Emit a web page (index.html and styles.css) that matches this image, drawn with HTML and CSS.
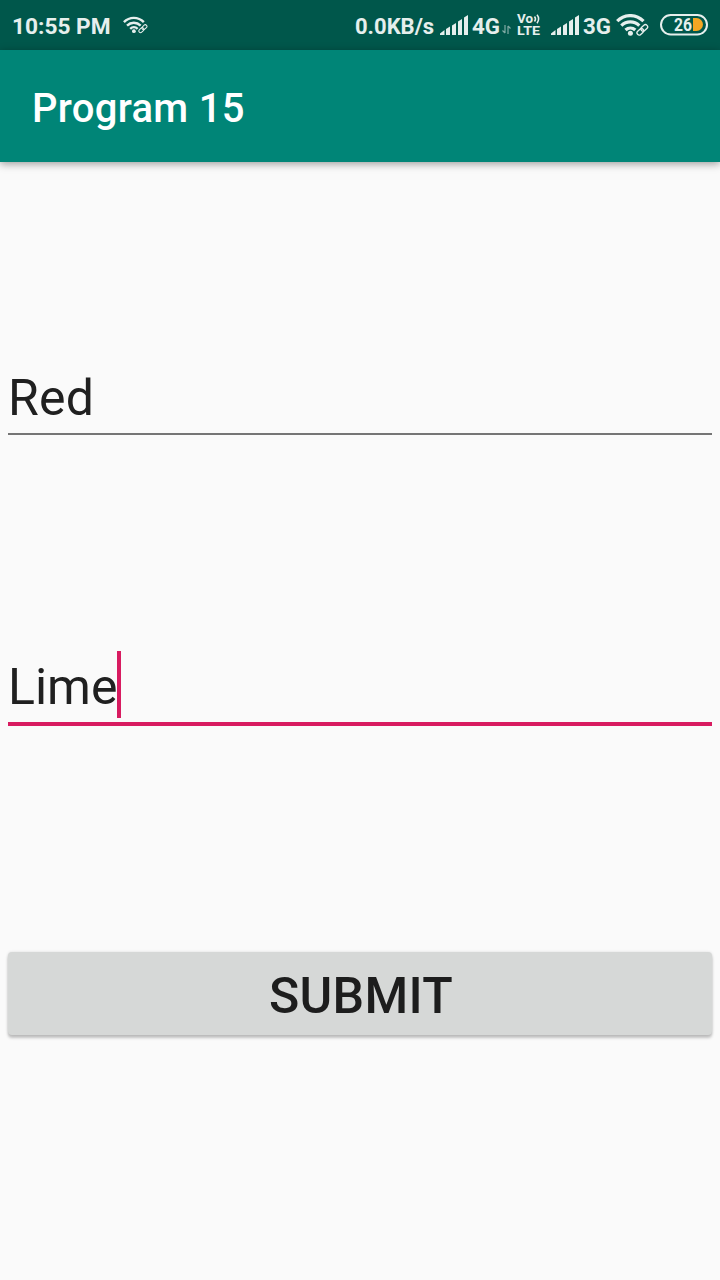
FILE: index.html
```html
<!DOCTYPE html>
<html lang="en">
<head>
<meta charset="utf-8">
<title>Program 15</title>
<link rel="stylesheet" href="styles.css">
</head>
<body>
<svg class="defs" aria-hidden="true">
  <symbol id="signal" viewBox="0 0 28 20">
    <path d="M0 20v-1.500l4.500-3.500v5zM6 14l4-2.500V20H6zM12 10.500l4-2.500v12h-4zM18 6.500l4-2.500v16h-4zM24 2.500L28 0v20h-4z"/>
  </symbol>
  <symbol id="wifi" viewBox="0 0 33 22">
    <g fill="none" stroke="currentColor" stroke-width="3.200">
      <path d="M1.200 7.200C8.500-.3 20 -.3 27.500 7.200"/>
      <path d="M5.300 11.700c5.200-5 12.800-5 18 0"/>
      <path d="M9.500 16c2.900-2.700 6.900-2.700 9.800 0"/>
    </g>
    <circle cx="14.400" cy="19.200" r="2.500"/>
    <g class="link-cut" fill="none" stroke-width="4.500">
      <path d="M21.500 20l8.500-7"/>
    </g>
    <g fill="none" stroke="currentColor" stroke-width="1.350">
      <rect x="-3.700" y="-2.200" width="7.400" height="4.400" rx="2.200" transform="translate(28.300 13.900) rotate(-43)"/>
      <rect x="-3.700" y="-2.200" width="7.400" height="4.400" rx="2.200" transform="translate(24.300 17.800) rotate(-43)"/>
    </g>
  </symbol>
</svg>
<header class="status-bar">
  <span class="time">10:55 PM</span>
  <svg class="wifi-small"><use href="#wifi"/></svg>
  <div class="status-right">
    <span class="speed">0.0KB/s</span>
    <svg class="signal"><use href="#signal"/></svg>
    <span class="network">4G</span>
    <svg class="data" viewBox="0 0 9 9"><path d="M3 0v8M0.500 5.500L3 8M6 9V1M8.500 3.500L6 1"/></svg>
    <svg class="volte" viewBox="0 0 25 22">
      <text x="0" y="9" textLength="16" lengthAdjust="spacingAndGlyphs">Vo</text>
      <text x="0" y="21" textLength="23" lengthAdjust="spacingAndGlyphs">LTE</text>
      <path d="M17.500 2.500q2 2.500 0 5M20 .8q3.200 4 0 8.400"/>
    </svg>
    <svg class="signal signal-second"><use href="#signal"/></svg>
    <span class="network">3G</span>
    <svg class="wifi"><use href="#wifi"/></svg>
    <svg class="battery" viewBox="0 0 48 22">
      <rect x="1" y="1" width="46" height="19.500" rx="9.750"/>
      <path d="M33 4h3.500a6.500 6.500 0 0 1 0 13H33z"/>
      <text x="14" y="17" textLength="18" lengthAdjust="spacingAndGlyphs">26</text>
    </svg>
  </div>
</header>
<div class="app-bar"><h1>Program 15</h1></div>
<main class="form">
  <div class="field">Red</div>
  <div class="field focused">Lime<span class="caret"></span></div>
  <button class="submit" type="button">SUBMIT</button>
</main>
</body>
</html>
```
FILE: styles.css
```css
* { box-sizing: border-box; }
body {
  margin: 0;
  height: 1280px;
  display: flex;
  flex-direction: column;
  overflow: hidden;
  background: #fafafa;
  color: #202020;
  font-family: Roboto, "Liberation Sans", sans-serif;
}
svg { display: block; flex: none; fill: currentColor; }
.defs { position: absolute; width: 0; height: 0; }
.status-bar {
  display: flex;
  flex: none;
  align-items: flex-start;
  height: 50px;
  padding: 0 12px;
  background: #00574b;
  color: #e6efed;
  font-size: 22.7px;
  font-weight: 700;
  line-height: 53px;
  white-space: nowrap;
}
.time { width: 99px; }
.wifi-small { width: 25px; height: 18px; margin: 16px 0 0 12px; }
.status-right { display: flex; margin-left: auto; }
.speed { width: 80px; margin-right: 5px; font-size: 22px; }
.signal { width: 28px; height: 20px; margin: 15px 4px 0 0; }
.network { width: 29px; font-size: 22.3px; }
.data { width: 9px; height: 9px; margin: 25px 6px 0 1px; fill: none; stroke: #80aba5; stroke-width: 1.2; }
.volte { width: 25px; height: 22px; margin: 14px 9px 0 0; overflow: visible; }
.volte text { font-size: 12px; font-weight: 700; }
.volte path { fill: none; stroke: currentColor; stroke-width: 1.5; }
.wifi { width: 33px; height: 22px; margin: 14px 11px 0 4px; }
.link-cut { stroke: #00574b; }
.battery { width: 48px; height: 22px; margin-top: 14px; }
.battery rect { fill: none; stroke: currentColor; stroke-width: 2; }
.battery path { fill: #f5a623; }
.battery text { font-size: 17.5px; font-weight: 700; }
.app-bar {
  display: flex;
  flex: none;
  align-items: center;
  height: 112px;
  padding: 6px 32px 0;
  background: #008577;
  color: #fff;
  box-shadow: 0 2px 8px rgba(0, 0, 0, .38);
}
.app-bar h1 { margin: 0; font-size: 40px; font-weight: 500; line-height: 48px; letter-spacing: .3px; }
.form { display: flex; flex-direction: column; padding: 200px 8px 0; }
.field {
  display: flex;
  height: 73px;
  border-bottom: 2px solid #757575;
  font-size: 50px;
  line-height: 73px;
  letter-spacing: .2px;
}
.focused { height: 75px; margin-top: 216px; border-bottom: 4px solid #d81b60; letter-spacing: 0; }
.caret { width: 4px; height: 67px; background: #d81b60; }
.submit {
  height: 83px;
  margin-top: 226px;
  padding: 5px 0 0 2px;
  border: 0;
  border-radius: 4px;
  background: #d6d8d7;
  color: #1d1d1d;
  box-shadow: 0 3px 3px rgba(0, 0, 0, .22), 0 0 3px rgba(0, 0, 0, .12);
  font: 500 50px/60px Roboto, "Liberation Sans", sans-serif;
  letter-spacing: .3px;
}
```
